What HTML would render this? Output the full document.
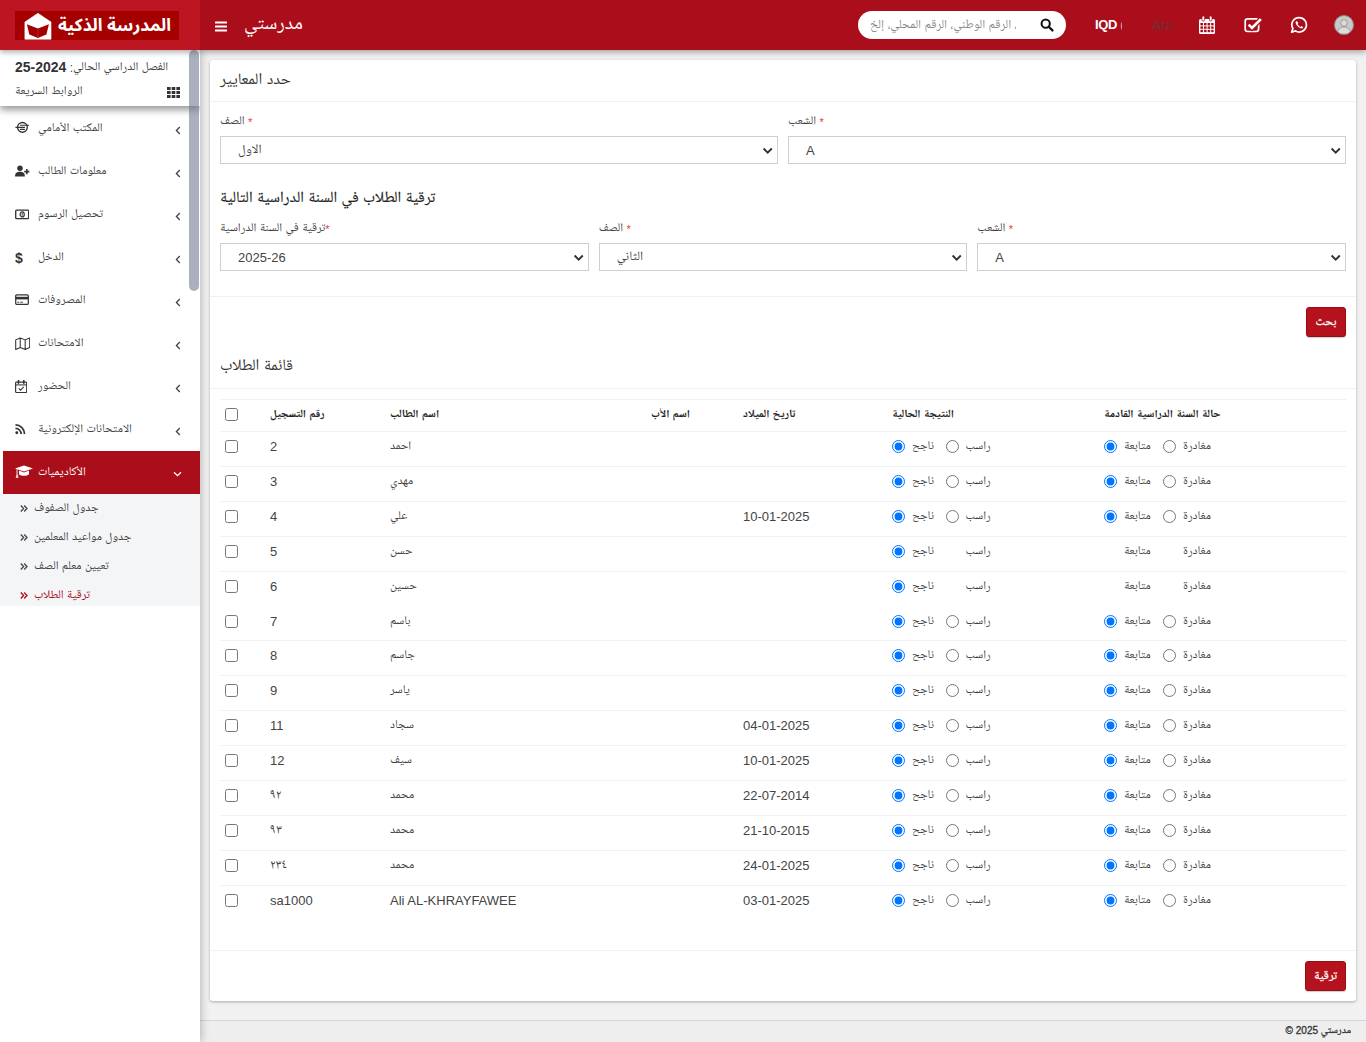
<!DOCTYPE html>
<html lang="ar">
<head>
<meta charset="utf-8">
<title>مدرستي</title>
<style>
*{box-sizing:border-box}
html,body{margin:0;padding:0}
body{width:1366px;height:1042px;overflow:hidden;background:#eeeeee;font-family:"Liberation Sans","Noto Naskh Arabic UI","Noto Naskh Arabic","DejaVu Sans",sans-serif;font-size:12px;color:#444;position:relative}
.hdr{position:absolute;left:0;top:0;width:1366px;height:50px;background:#aa0e1a;box-shadow:0 2px 6px rgba(0,0,0,.35);z-index:10}
.logo{position:absolute;left:0;top:0;width:200px;height:50px;background:#bd1622}
.logobox{position:absolute;left:15px;top:11px;width:164px;height:29px;background:#a50000}
.logotxt{position:absolute;left:40px;top:-1px;width:116px;text-align:right;display:block;direction:rtl;color:#fff;font-family:"Noto Sans Arabic UI","Noto Sans Arabic","DejaVu Sans",sans-serif;font-weight:bold;font-size:17.4px;line-height:29px;white-space:nowrap}
.side{position:absolute;left:0;top:50px;width:200px;height:992px;overflow:hidden;background:#fff;box-shadow:1px 0 8px rgba(0,0,0,.25);z-index:5}
.main{position:absolute;left:200px;top:50px;width:1166px;height:992px;background:#f1f1f1}
.card{position:absolute;left:10px;top:10px;width:1146px;height:941px;background:#fff;border-radius:3px;box-shadow:0 1px 3px rgba(0,0,0,.3)}

.hdr .ham{position:absolute;left:215px;top:21px;width:12px;height:11px}
.hdr .brand{position:absolute;left:244px;top:13px;color:#fff;font-size:19.5px;line-height:24px;white-space:nowrap}
.srch{position:absolute;left:858px;top:11px;width:208px;height:28px;background:#fff;border-radius:14px;overflow:hidden}
.srch span{position:absolute;left:12px;top:2px;width:146px;overflow:hidden;line-height:27px;font-size:12.5px;color:#8a8a8a;white-space:nowrap;direction:ltr}
.srch svg{position:absolute;left:182px;top:7px}
.cur{position:absolute;left:1095px;top:16px;color:#fff;font-weight:bold;font-size:13px;line-height:18px;letter-spacing:-.3px}
.cur i{font-style:normal;font-weight:normal;color:#e7b5b9;font-size:11px;margin-left:3px;display:inline-block;width:2px;overflow:hidden;vertical-align:top}
.lang{position:absolute;left:1152px;top:15px;color:#6d3239;font-size:14px;line-height:20px;width:19px;overflow:hidden}
.hic{position:absolute}
.avatar{position:absolute;left:1334px;top:15px;width:20px;height:20px;border-radius:50%;background:#c9c9c9;overflow:hidden;border:1px solid #8d8d8d}

.stop{position:absolute;left:0;top:0;width:200px;height:56px;background:#fff;box-shadow:0 4px 7px rgba(0,0,0,.4);z-index:2}
.stop .l1{position:absolute;left:15px;top:7px;font-size:12px;line-height:20px;color:#444;white-space:nowrap}
.stop .l1 b{font-size:14px;color:#333}
.stop .l2{position:absolute;left:15px;top:32px;font-size:12px;line-height:20px;color:#444;white-space:nowrap}
.stop svg{position:absolute;left:167px;top:37px}
.sbar{position:absolute;left:189px;top:0;width:10px;height:992px;z-index:3}
.sbar i{position:absolute;left:0;top:0;width:10px;height:241px;background:rgba(100,112,135,.55);border-radius:5px}
.menu{position:absolute;left:0;top:57px;width:200px;margin:0;padding:0;list-style:none}
.menu>li{height:43px;position:relative;border-left:3px solid #fff}
.menu>li .t{position:absolute;left:35px;top:12px;font-size:12px;line-height:20px;color:#444;white-space:nowrap}
.menu>li .ic{position:absolute;left:12px;top:14px}
.menu>li .ch{position:absolute;left:172px;top:19px}
.menu>li.act{background:#aa0e1a}
.menu>li.act .t{color:#fff}
.sub{position:absolute;left:0;top:444px;width:200px;height:112px;background:#f4f5f7;margin:0;padding:0;list-style:none}
.sub li{height:29px;position:relative}
.sub li span{position:absolute;left:34px;top:5px;font-size:12px;line-height:20px;color:#444;white-space:nowrap}
.sub li svg{position:absolute;left:20px;top:11px}
.sub li.on span{color:#aa0e1a}

.card .ttl{position:absolute;left:10px;font-size:16px;line-height:22px;color:#333;white-space:nowrap}
.hr{position:absolute;left:0;width:1146px;height:1px;background:#f1f1f1}
.lbl{position:absolute;font-size:12px;line-height:16px;color:#444;white-space:nowrap}
.lbl em{font-style:normal;color:#e8383d;font-size:11px}
.sel{position:absolute;height:28px;border:1px solid #cfcfcf;background:#fff;font-size:13px;line-height:28px;color:#444;padding-left:17px;white-space:nowrap}
.sel svg{position:absolute;right:4px;top:10px}
.h4{position:absolute;left:10px;top:128px;font-size:15.5px;line-height:22px;color:#222;white-space:nowrap;-webkit-text-stroke:.15px #222}
.btn{position:absolute;left:1096px;width:40px;height:30px;background:#b5121d;border:1px solid #970c15;border-radius:3px;color:#fff;font-size:12px;line-height:31px;-webkit-text-stroke:.25px #fff;text-align:center;box-shadow:0 1px 1px rgba(0,0,0,.2)}
.foot{position:absolute;left:0;top:970px;width:1166px;height:22px;border-top:1px solid #d2d6de;background:#eeeeee;font-size:10px;-webkit-text-stroke:.3px #333;line-height:20px;color:#333;text-align:right;padding-right:15px;direction:ltr}

table.tb{position:absolute;left:10px;top:339px;width:1126px;border-collapse:collapse;table-layout:fixed}
.tb th,.tb td{padding:0 8px;text-align:left;font-weight:normal;border-top:1px solid #f1f1f1;white-space:nowrap;overflow:visible;vertical-align:top}
.tb th{height:32px;font-size:11.3px;font-weight:bold;color:#222;line-height:30px}
.tb td{height:35px;font-size:13px;color:#444;line-height:29px}
.tb td.ar{font-size:12px;line-height:31px}
.tb input{margin:0;padding:0;width:13px;height:13px;vertical-align:top;position:relative}
.tb input[type=checkbox]{left:-3px;top:8px}
.tb td input[type=checkbox]{top:8px}
.tb .r{display:inline-block;font-size:12px;line-height:31px;vertical-align:top}
.tb .r input{top:8px;margin-right:7px}
.tb .r.h input{visibility:hidden}
.tb tr.nb td{border-top:0;height:34px}
</style>
</head>
<body>
<div class="hdr">
  <div class="logo"><div class="logobox"><svg style="position:absolute;left:9px;top:1px" width="28" height="28" viewBox="24 11 28 28"><path d="M37.9 12.3 L51 21 V38.2 H24.9 V21 Z" fill="#fff" stroke="#fff" stroke-width=".6" stroke-linejoin="round"/><path d="M26.9 23.2 L37.9 27.5 L48.9 23.2 L46.4 33.6 L37.9 37 L29.3 33.6 Z" fill="#a50000"/><path d="M37.9 27.5 V37" stroke="#b82626" stroke-width=".9"/></svg><span class="logotxt">المدرسة الذكية</span></div></div>
  <svg class="ham" viewBox="0 0 12 11"><rect x="0" y="0.5" width="12" height="2" rx=".6" fill="#fff"/><rect x="0" y="4.5" width="12" height="2" rx=".6" fill="#fff"/><rect x="0" y="8.5" width="12" height="2" rx=".6" fill="#fff"/></svg>
  <div class="brand">مدرستي</div>
  <div class="srch"><span>بحث بالاسم، الرقم الوطني، الرقم المحلي، إلخ</span>
    <svg width="14" height="14" viewBox="0 0 16 16"><circle cx="6.5" cy="6.5" r="4.7" fill="none" stroke="#111" stroke-width="2.3"/><path d="M10 10 L14.2 14.2" stroke="#111" stroke-width="2.6" stroke-linecap="round"/></svg>
  </div>
  <div class="cur">IQD<i>(</i></div>
  <div class="lang">Arabic</div>
  <svg class="hic" style="left:1199px;top:16px" width="16" height="18" viewBox="0 0 16 18"><path fill="#fff" d="M0 4.5 Q0 3 1.5 3 H14.5 Q16 3 16 4.5 V16.5 Q16 18 14.5 18 H1.5 Q0 18 0 16.5 Z"/><rect x="3" y="0" width="2.6" height="5" rx="1.2" fill="#fff" stroke="#aa0e1a" stroke-width=".8"/><rect x="10.4" y="0" width="2.6" height="5" rx="1.2" fill="#fff" stroke="#aa0e1a" stroke-width=".8"/><g fill="#aa0e1a"><rect x="1.4" y="7" width="2.6" height="2.4"/><rect x="5" y="7" width="2.6" height="2.4"/><rect x="8.6" y="7" width="2.6" height="2.4"/><rect x="12.2" y="7" width="2.4" height="2.4"/><rect x="1.4" y="10.4" width="2.6" height="2.4"/><rect x="5" y="10.4" width="2.6" height="2.4"/><rect x="8.6" y="10.4" width="2.6" height="2.4"/><rect x="12.2" y="10.4" width="2.4" height="2.4"/><rect x="1.4" y="13.8" width="2.6" height="2.4"/><rect x="5" y="13.8" width="2.6" height="2.4"/><rect x="8.6" y="13.8" width="2.6" height="2.4"/><rect x="12.2" y="13.8" width="2.4" height="2.4"/></g></svg>
  <svg class="hic" style="left:1244px;top:16px" width="19" height="17" viewBox="0 0 19 17"><rect x="1.2" y="2.9" width="13.4" height="12.6" rx="2.4" fill="none" stroke="#fff" stroke-width="1.7"/><path d="M4.3 8.4 L8 12 L17.2 2.9" fill="none" stroke="#aa0e1a" stroke-width="5"/><path d="M4.6 8.6 L8 11.9 L16.9 3.1" fill="none" stroke="#fff" stroke-width="2.7"/></svg>
  <svg class="hic" style="left:1290px;top:16px" width="18" height="18" viewBox="0 0 18 18"><path d="M9.2 1.6 A7.2 7.2 0 1 1 5.4 14.9 L1.6 16.2 L2.9 12.5 A7.2 7.2 0 0 1 9.2 1.6 Z" fill="none" stroke="#fff" stroke-width="1.7" stroke-linejoin="round"/><path d="M6.6 5 C5.6 5.4 5.4 6.6 5.9 7.8 C6.8 9.9 8.6 11.6 10.7 12.3 C11.8 12.6 12.9 12.2 13.2 11.2 L11.4 10.1 L10.5 10.9 C9.3 10.4 8.1 9.2 7.6 8 L8.4 7.1 Z" fill="#fff"/></svg>
  <div class="avatar"><svg width="18" height="18" viewBox="0 0 18 18"><circle cx="9" cy="7" r="3.3" fill="#dcdcdc" stroke="#8a8a8a" stroke-width=".8"/><path d="M2.5 18 C2.5 12.5 6 11 9 11 C12 11 15.5 12.5 15.5 18 Z" fill="#dcdcdc" stroke="#8a8a8a" stroke-width=".8"/></svg></div>
</div>
<div class="side">
<div class="stop"><div class="l1">الفصل الدراسي الحالي: <b>2024-25</b></div><div class="l2">الروابط السريعة</div><svg width="13" height="11" viewBox="0 0 13 11"><g fill="#333"><rect x="0" y="0" width="3.6" height="3"/><rect x="4.7" y="0" width="3.6" height="3"/><rect x="9.4" y="0" width="3.6" height="3"/><rect x="0" y="4" width="3.6" height="3"/><rect x="4.7" y="4" width="3.6" height="3"/><rect x="9.4" y="4" width="3.6" height="3"/><rect x="0" y="8" width="3.6" height="3"/><rect x="4.7" y="8" width="3.6" height="3"/><rect x="9.4" y="8" width="3.6" height="3"/></g></svg></div>
<div class="sbar"><i></i></div>
<ul class="menu">
<li><svg class="ic" width="14.5" height="12.7" viewBox="0 0 16 14"><circle cx="8.2" cy="7" r="5.4" fill="none" stroke="#333" stroke-width="1.5"/><path d="M0.5 7 H11 M5.6 4.7 H15.5 M5.6 9.3 H10.8" stroke="#333" stroke-width="1.3" fill="none"/></svg><span class="t">المكتب الأمامي</span><svg class="ch" width="6" height="9" viewBox="0 0 6 9"><path d="M4.8 1 L1.4 4.5 L4.8 8" fill="none" stroke="#444" stroke-width="1.3"/></svg></li>
<li><svg class="ic" style="top:15px" width="15" height="12.3" viewBox="0 0 17 14"><circle cx="5.6" cy="3.8" r="3.1" fill="#333"/><path d="M0 13 C0 8.6 2.4 7.6 5.6 7.6 C8.8 7.6 11.2 8.6 11.2 13 Z" fill="#333"/><path d="M13.4 4.6 V10.4 M10.5 7.5 H16.3" stroke="#333" stroke-width="1.8"/></svg><span class="t">معلومات الطالب</span><svg class="ch" width="6" height="9" viewBox="0 0 6 9"><path d="M4.8 1 L1.4 4.5 L4.8 8" fill="none" stroke="#444" stroke-width="1.3"/></svg></li>
<li><svg class="ic" style="top:16px" width="14.4" height="10.8" viewBox="0 0 16 12"><rect x=".8" y="1.3" width="14.4" height="9.4" rx="1" fill="none" stroke="#333" stroke-width="1.5"/><ellipse cx="8" cy="6" rx="2.3" ry="2.8" fill="none" stroke="#333" stroke-width="1.3"/><path d="M8 4.4 V7.6" stroke="#333" stroke-width="1"/></svg><span class="t">تحصيل الرسوم</span><svg class="ch" width="6" height="9" viewBox="0 0 6 9"><path d="M4.8 1 L1.4 4.5 L4.8 8" fill="none" stroke="#444" stroke-width="1.3"/></svg></li>
<li><svg class="ic" width="10" height="15" viewBox="0 0 10 15"><text x="0" y="13" font-family="Liberation Sans,sans-serif" font-weight="bold" font-size="14" fill="#333">$</text></svg><span class="t">الدخل</span><svg class="ch" width="6" height="9" viewBox="0 0 6 9"><path d="M4.8 1 L1.4 4.5 L4.8 8" fill="none" stroke="#444" stroke-width="1.3"/></svg></li>
<li><svg class="ic" style="top:15px" width="14" height="11.2" preserveAspectRatio="none" viewBox="0 0 16 12"><rect x=".8" y=".9" width="14.4" height="10.2" rx="1.3" fill="none" stroke="#333" stroke-width="1.4"/><rect x=".8" y="3" width="14.4" height="2.8" fill="#333"/><path d="M2.6 8.8 H5 M6 8.8 H9" stroke="#333" stroke-width="1"/></svg><span class="t">المصروفات</span><svg class="ch" width="6" height="9" viewBox="0 0 6 9"><path d="M4.8 1 L1.4 4.5 L4.8 8" fill="none" stroke="#444" stroke-width="1.3"/></svg></li>
<li><svg class="ic" style="top:15px" width="15.4" height="13.4" viewBox="0 0 16 14"><path d="M.7 3 L5.4 1 L10.6 3 L15.3 1 V11 L10.6 13 L5.4 11 L.7 13 Z M5.4 1 V11 M10.6 3 V13" fill="none" stroke="#333" stroke-width="1.1" stroke-linejoin="round"/></svg><span class="t">الامتحانات</span><svg class="ch" width="6" height="9" viewBox="0 0 6 9"><path d="M4.8 1 L1.4 4.5 L4.8 8" fill="none" stroke="#444" stroke-width="1.3"/></svg></li>
<li><svg class="ic" style="top:15px" width="12.3" height="13.2" viewBox="0 0 14 15"><rect x=".7" y="2.4" width="12.6" height="11.8" rx="1" fill="none" stroke="#333" stroke-width="1.3"/><path d="M.7 5.6 H13.3" stroke="#333" stroke-width="1.2"/><path d="M4 .5 V3.6 M10 .5 V3.6" stroke="#333" stroke-width="1.8" stroke-linecap="round"/><path d="M4.2 9.6 L6.2 11.6 L10 7.8" fill="none" stroke="#333" stroke-width="1.2"/></svg><span class="t">الحضور</span><svg class="ch" width="6" height="9" viewBox="0 0 6 9"><path d="M4.8 1 L1.4 4.5 L4.8 8" fill="none" stroke="#444" stroke-width="1.3"/></svg></li>
<li><svg class="ic" style="top:16px" width="10.5" height="10.5" viewBox="0 0 13 13"><circle cx="2.2" cy="10.8" r="1.8" fill="#333"/><path d="M.6 5.4 A7 7 0 0 1 7.6 12.4 M.6 1.2 A11.2 11.2 0 0 1 11.8 12.4" fill="none" stroke="#333" stroke-width="2.1"/></svg><span class="t">الامتحانات الإلكترونية</span><svg class="ch" width="6" height="9" viewBox="0 0 6 9"><path d="M4.8 1 L1.4 4.5 L4.8 8" fill="none" stroke="#444" stroke-width="1.3"/></svg></li>
<li class="act"><svg class="ic" width="18" height="13" viewBox="0 0 18 13"><path d="M0 3.4 L9 .4 L18 3.4 L9 6.4 Z" fill="#fff"/><path d="M4 5.6 V9 C4 11.4 14 11.4 14 9 V5.6 L9 7.4 Z" fill="#fff"/><path d="M2 4.2 V9.4 L1.2 12.6 H3 L2.4 9.4" fill="none" stroke="#fff" stroke-width=".9"/></svg><span class="t">الأكاديميات</span><svg class="ch" style="left:170px;top:20px" width="9" height="6" viewBox="0 0 9 6"><path d="M1 1.2 L4.5 4.6 L8 1.2" fill="none" stroke="#fff" stroke-width="1.3"/></svg></li>
</ul>
<ul class="sub">
<li><svg width="8" height="7" viewBox="0 0 8 7"><path d="M.8 .5 L3.6 3.5 L.8 6.5 M4.2 .5 L7 3.5 L4.2 6.5" fill="none" stroke="#444" stroke-width="1.3"/></svg><span>جدول الصفوف</span></li>
<li><svg width="8" height="7" viewBox="0 0 8 7"><path d="M.8 .5 L3.6 3.5 L.8 6.5 M4.2 .5 L7 3.5 L4.2 6.5" fill="none" stroke="#444" stroke-width="1.3"/></svg><span>جدول مواعيد المعلمين</span></li>
<li><svg width="8" height="7" viewBox="0 0 8 7"><path d="M.8 .5 L3.6 3.5 L.8 6.5 M4.2 .5 L7 3.5 L4.2 6.5" fill="none" stroke="#444" stroke-width="1.3"/></svg><span>تعيين معلم الصف</span></li>
<li class="on"><svg width="8" height="7" viewBox="0 0 8 7"><path d="M.8 .5 L3.6 3.5 L.8 6.5 M4.2 .5 L7 3.5 L4.2 6.5" fill="none" stroke="#aa0e1a" stroke-width="1.3"/></svg><span>ترقية الطلاب</span></li>
</ul>
</div>
<div class="main"><div class="card">
<div class="ttl" style="top:10px">حدد المعايير</div>
<div class="hr" style="top:41px"></div>
<div class="lbl" style="left:10px;top:54px">الصف <em>*</em></div>
<div class="lbl" style="left:578px;top:54px">الشعب <em>*</em></div>
<div class="sel" style="left:10.00px;top:76px;width:558.00px">الاول<svg width="12" height="8" viewBox="0 0 12 8"><path d="M2.6 1.5 L6.7 5.6 L10.8 1.5" fill="none" stroke="#333" stroke-width="1.9"/></svg></div>
<div class="sel" style="left:578.00px;top:76px;width:558.00px">A<svg width="12" height="8" viewBox="0 0 12 8"><path d="M2.6 1.5 L6.7 5.6 L10.8 1.5" fill="none" stroke="#333" stroke-width="1.9"/></svg></div>
<div class="h4">ترقية الطلاب في السنة الدراسية التالية</div>
<div class="lbl" style="left:10px;top:161px">ترقية في السنة الدراسية<em>*</em></div>
<div class="lbl" style="left:388.67px;top:161px">الصف <em>*</em></div>
<div class="lbl" style="left:767.33px;top:161px">الشعب <em>*</em></div>
<div class="sel" style="left:10.00px;top:183px;width:368.67px">2025-26<svg width="12" height="8" viewBox="0 0 12 8"><path d="M2.6 1.5 L6.7 5.6 L10.8 1.5" fill="none" stroke="#333" stroke-width="1.9"/></svg></div>
<div class="sel" style="left:388.67px;top:183px;width:368.67px">الثاني<svg width="12" height="8" viewBox="0 0 12 8"><path d="M2.6 1.5 L6.7 5.6 L10.8 1.5" fill="none" stroke="#333" stroke-width="1.9"/></svg></div>
<div class="sel" style="left:767.33px;top:183px;width:368.67px">A<svg width="12" height="8" viewBox="0 0 12 8"><path d="M2.6 1.5 L6.7 5.6 L10.8 1.5" fill="none" stroke="#333" stroke-width="1.9"/></svg></div>
<div class="hr" style="top:236px"></div>
<div class="btn" style="top:247px">بحث</div>
<div class="ttl" style="top:296px">قائمة الطلاب</div>
<div class="hr" style="top:328px"></div>
<table class="tb"><colgroup><col style="width:42px"><col style="width:120px"><col style="width:261px"><col style="width:92px"><col style="width:149px"><col style="width:212px"><col style="width:250px"></colgroup>
<tr><th><input type="checkbox"></th><th>رقم التسجيل</th><th>اسم الطالب</th><th>اسم الأب</th><th>تاريخ الميلاد</th><th>النتيجة الحالية</th><th>حالة السنة الدراسية القادمة</th></tr>
<tr><td><input type="checkbox"></td><td>2</td><td class="ar">احمد</td><td></td><td></td><td><span class="r" style="width:53.5px"><input type="radio" name="r0a" checked>ناجح</span><span class="r"><input type="radio" name="r0a">راسب</span></td><td><span class="r" style="width:59px"><input type="radio" name="r0b" checked>متابعة</span><span class="r"><input type="radio" name="r0b">مغادرة</span></td></tr>
<tr><td><input type="checkbox"></td><td>3</td><td class="ar">مهدي</td><td></td><td></td><td><span class="r" style="width:53.5px"><input type="radio" name="r1a" checked>ناجح</span><span class="r"><input type="radio" name="r1a">راسب</span></td><td><span class="r" style="width:59px"><input type="radio" name="r1b" checked>متابعة</span><span class="r"><input type="radio" name="r1b">مغادرة</span></td></tr>
<tr><td><input type="checkbox"></td><td>4</td><td class="ar">علي</td><td></td><td>10-01-2025</td><td><span class="r" style="width:53.5px"><input type="radio" name="r2a" checked>ناجح</span><span class="r"><input type="radio" name="r2a">راسب</span></td><td><span class="r" style="width:59px"><input type="radio" name="r2b" checked>متابعة</span><span class="r"><input type="radio" name="r2b">مغادرة</span></td></tr>
<tr><td><input type="checkbox"></td><td>5</td><td class="ar">حسن</td><td></td><td></td><td><span class="r" style="width:53.5px"><input type="radio" name="r3a" checked>ناجح</span><span class="r h"><input type="radio" name="r3a">راسب</span></td><td><span class="r h" style="width:59px"><input type="radio" name="r3b">متابعة</span><span class="r h"><input type="radio" name="r3b">مغادرة</span></td></tr>
<tr><td><input type="checkbox"></td><td>6</td><td class="ar">حسين</td><td></td><td></td><td><span class="r" style="width:53.5px"><input type="radio" name="r4a" checked>ناجح</span><span class="r h"><input type="radio" name="r4a">راسب</span></td><td><span class="r h" style="width:59px"><input type="radio" name="r4b">متابعة</span><span class="r h"><input type="radio" name="r4b">مغادرة</span></td></tr>
<tr class="nb"><td><input type="checkbox"></td><td>7</td><td class="ar">باسم</td><td></td><td></td><td><span class="r" style="width:53.5px"><input type="radio" name="r5a" checked>ناجح</span><span class="r"><input type="radio" name="r5a">راسب</span></td><td><span class="r" style="width:59px"><input type="radio" name="r5b" checked>متابعة</span><span class="r"><input type="radio" name="r5b">مغادرة</span></td></tr>
<tr><td><input type="checkbox"></td><td>8</td><td class="ar">جاسم</td><td></td><td></td><td><span class="r" style="width:53.5px"><input type="radio" name="r6a" checked>ناجح</span><span class="r"><input type="radio" name="r6a">راسب</span></td><td><span class="r" style="width:59px"><input type="radio" name="r6b" checked>متابعة</span><span class="r"><input type="radio" name="r6b">مغادرة</span></td></tr>
<tr><td><input type="checkbox"></td><td>9</td><td class="ar">ياسر</td><td></td><td></td><td><span class="r" style="width:53.5px"><input type="radio" name="r7a" checked>ناجح</span><span class="r"><input type="radio" name="r7a">راسب</span></td><td><span class="r" style="width:59px"><input type="radio" name="r7b" checked>متابعة</span><span class="r"><input type="radio" name="r7b">مغادرة</span></td></tr>
<tr><td><input type="checkbox"></td><td>11</td><td class="ar">سجاد</td><td></td><td>04-01-2025</td><td><span class="r" style="width:53.5px"><input type="radio" name="r8a" checked>ناجح</span><span class="r"><input type="radio" name="r8a">راسب</span></td><td><span class="r" style="width:59px"><input type="radio" name="r8b" checked>متابعة</span><span class="r"><input type="radio" name="r8b">مغادرة</span></td></tr>
<tr><td><input type="checkbox"></td><td>12</td><td class="ar">سيف</td><td></td><td>10-01-2025</td><td><span class="r" style="width:53.5px"><input type="radio" name="r9a" checked>ناجح</span><span class="r"><input type="radio" name="r9a">راسب</span></td><td><span class="r" style="width:59px"><input type="radio" name="r9b" checked>متابعة</span><span class="r"><input type="radio" name="r9b">مغادرة</span></td></tr>
<tr><td><input type="checkbox"></td><td>٩٢</td><td class="ar">محمد</td><td></td><td>22-07-2014</td><td><span class="r" style="width:53.5px"><input type="radio" name="r10a" checked>ناجح</span><span class="r"><input type="radio" name="r10a">راسب</span></td><td><span class="r" style="width:59px"><input type="radio" name="r10b" checked>متابعة</span><span class="r"><input type="radio" name="r10b">مغادرة</span></td></tr>
<tr><td><input type="checkbox"></td><td>٩٣</td><td class="ar">محمد</td><td></td><td>21-10-2015</td><td><span class="r" style="width:53.5px"><input type="radio" name="r11a" checked>ناجح</span><span class="r"><input type="radio" name="r11a">راسب</span></td><td><span class="r" style="width:59px"><input type="radio" name="r11b" checked>متابعة</span><span class="r"><input type="radio" name="r11b">مغادرة</span></td></tr>
<tr><td><input type="checkbox"></td><td>٢٣٤</td><td class="ar">محمد</td><td></td><td>24-01-2025</td><td><span class="r" style="width:53.5px"><input type="radio" name="r12a" checked>ناجح</span><span class="r"><input type="radio" name="r12a">راسب</span></td><td><span class="r" style="width:59px"><input type="radio" name="r12b" checked>متابعة</span><span class="r"><input type="radio" name="r12b">مغادرة</span></td></tr>
<tr><td><input type="checkbox"></td><td>sa1000</td><td>Ali AL-KHRAYFAWEE</td><td></td><td>03-01-2025</td><td><span class="r" style="width:53.5px"><input type="radio" name="r13a" checked>ناجح</span><span class="r"><input type="radio" name="r13a">راسب</span></td><td><span class="r" style="width:59px"><input type="radio" name="r13b" checked>متابعة</span><span class="r"><input type="radio" name="r13b">مغادرة</span></td></tr>
</table>
<div class="hr" style="top:890px"></div>
<div class="btn" style="top:901px;left:1095px;width:41px">ترقية</div>
</div>
<div class="foot">&copy; 2025 مدرستي</div></div>
</body>
</html>
